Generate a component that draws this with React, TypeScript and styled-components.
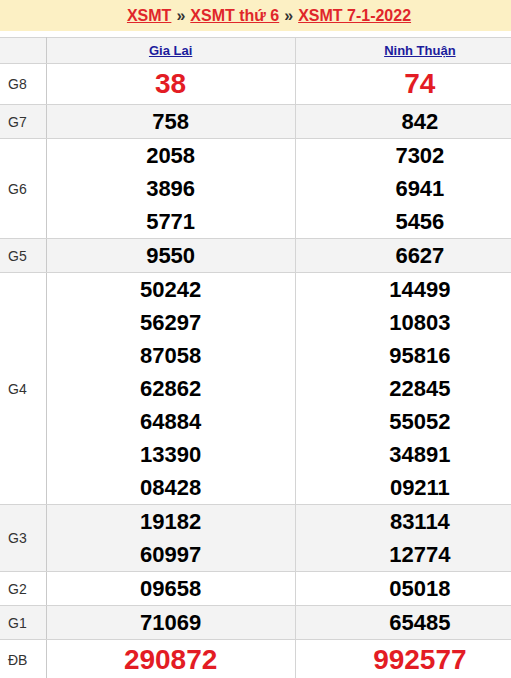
import styled, { createGlobalStyle } from 'styled-components';

const GlobalStyle = createGlobalStyle`
  html, body {
    margin: 0;
    padding: 0;
    background: #fff;
    overflow: hidden;
  }
  body {
    font-family: "Liberation Sans", Arial, sans-serif;
  }
`;

const Wrapper = styled.div`
  width: 545px;
`;

// dải tiêu đề vàng phía trên
const TopBar = styled.div`
  height: 31px;
  padding-right: 7px;
  background: #fcf0c4;
  display: flex;
  align-items: center;
  justify-content: center;
  gap: 5px;
  font-size: 16px;
  font-weight: 700;
  color: #333;
`;

const TopLink = styled.a`
  color: #e0262a;
  text-decoration: underline;
  cursor: pointer;
`;

const Table = styled.table`
  width: 545px;
  margin-top: 6px;
  border-collapse: collapse;
  table-layout: fixed;
`;

const Row = styled.tr<{ $shade?: boolean }>`
  background: ${(p) => (p.$shade ? '#f3f3f3' : '#fff')};
`;

const Label = styled.td`
  width: 46px;
  padding: 0 0 0 8px;
  box-sizing: border-box;
  border-top: 1px solid #d4d4d4;
  border-bottom: 1px solid #d4d4d4;
  border-right: 1px solid #c9c9c9;
  font-size: 14px;
  color: #333;
  vertical-align: middle;
`;

const Cell = styled.td`
  padding: 0;
  border: 1px solid #d4d4d4;
  border-left-color: #c9c9c9;
  text-align: center;
  vertical-align: middle;
`;

const HeadCell = styled(Cell)`
  height: 25px;
  font-size: 13px;
  font-weight: 700;
`;

const Province = styled.a`
  color: #1c1c9c;
  text-decoration: underline;
  cursor: pointer;
`;

// số trúng thưởng, giải 8 và đặc biệt to và đỏ
const Num = styled.div<{ $big?: boolean }>`
  font-size: ${(p) => (p.$big ? '28px' : '22px')};
  line-height: ${(p) => (p.$big ? '40px' : '33px')};
  font-weight: 700;
  color: ${(p) => (p.$big ? '#e31c24' : '#000')};
`;

type Prize = { name: string; big?: boolean; a: string[]; b: string[] };

const prizes: Prize[] = [
  { name: 'G8', big: true, a: ['38'], b: ['74'] },
  { name: 'G7', a: ['758'], b: ['842'] },
  { name: 'G6', a: ['2058', '3896', '5771'], b: ['7302', '6941', '5456'] },
  { name: 'G5', a: ['9550'], b: ['6627'] },
  {
    name: 'G4',
    a: ['50242', '56297', '87058', '62862', '64884', '13390', '08428'],
    b: ['14499', '10803', '95816', '22845', '55052', '34891', '09211'],
  },
  { name: 'G3', a: ['19182', '60997'], b: ['83114', '12774'] },
  { name: 'G2', a: ['09658'], b: ['05018'] },
  { name: 'G1', a: ['71069'], b: ['65485'] },
  { name: 'ĐB', big: true, a: ['290872'], b: ['992577'] },
];

const App = () => {
  return (
    <Wrapper>
      <GlobalStyle />
      <TopBar>
        <TopLink>XSMT</TopLink>
        <span>»</span>
        <TopLink>XSMT thứ 6</TopLink>
        <span>»</span>
        <TopLink>XSMT 7-1-2022</TopLink>
      </TopBar>
      <Table>
        <tbody>
          <Row $shade>
            <Label />
            <HeadCell>
              <Province>Gia Lai</Province>
            </HeadCell>
            <HeadCell>
              <Province>Ninh Thuận</Province>
            </HeadCell>
          </Row>
          {prizes.map((p, i) => (
            <Row key={p.name} $shade={i % 2 === 1}>
              <Label>{p.name}</Label>
              <Cell>
                {p.a.map((n) => (
                  <Num key={n} $big={p.big}>
                    {n}
                  </Num>
                ))}
              </Cell>
              <Cell>
                {p.b.map((n) => (
                  <Num key={n} $big={p.big}>
                    {n}
                  </Num>
                ))}
              </Cell>
            </Row>
          ))}
        </tbody>
      </Table>
    </Wrapper>
  );
};

export default App;
